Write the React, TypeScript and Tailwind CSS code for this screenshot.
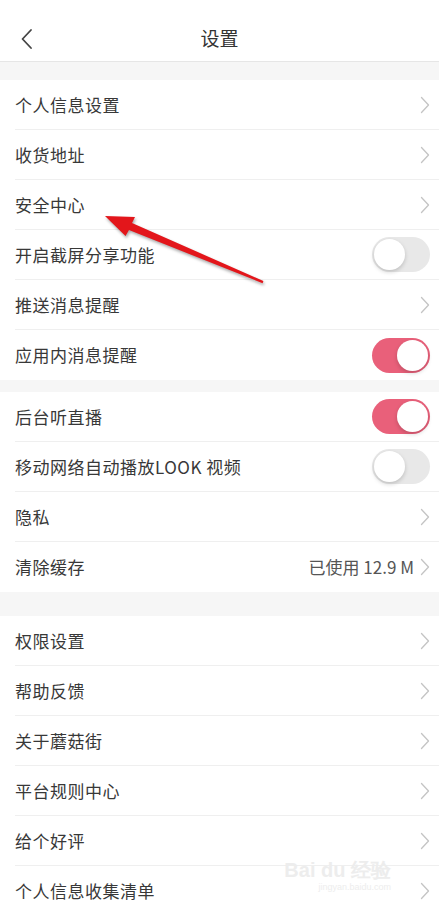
import React from 'react';

type Row = {
  label: string;
  kind: 'link' | 'on' | 'off';
  value?: string;
};

const groups: Row[][] = [
  [
    { label: '个人信息设置', kind: 'link' },
    { label: '收货地址', kind: 'link' },
    { label: '安全中心', kind: 'link' },
    { label: '开启截屏分享功能', kind: 'off' },
    { label: '推送消息提醒', kind: 'link' },
    { label: '应用内消息提醒', kind: 'on' },
  ],
  [
    { label: '后台听直播', kind: 'on' },
    { label: '移动网络自动播放LOOK 视频', kind: 'off' },
    { label: '隐私', kind: 'link' },
    { label: '清除缓存', kind: 'link', value: '已使用 12.9 M' },
  ],
  [
    { label: '权限设置', kind: 'link' },
    { label: '帮助反馈', kind: 'link' },
    { label: '关于蘑菇街', kind: 'link' },
    { label: '平台规则中心', kind: 'link' },
    { label: '给个好评', kind: 'link' },
    { label: '个人信息收集清单', kind: 'link' },
  ],
];

const Chevron = () => (
  <svg width="10" height="18" viewBox="0 0 10 18" fill="none">
    <path d="M1.5 1.5 L8.5 9 L1.5 16.5" stroke="#c4c4c4" strokeWidth="1.3" strokeLinecap="round" strokeLinejoin="round" />
  </svg>
);

const Toggle = ({ on }: { on: boolean }) => (
  <div
    className={`w-[58px] h-[35px] rounded-full p-[2px] flex items-center ${
      on ? 'bg-[#e9607a] justify-end' : 'bg-[#e8e8e8] justify-start'
    }`}
  >
    <div className="w-[31px] h-[31px] rounded-full bg-white shadow-[0_2px_4px_rgba(0,0,0,0.18)]" />
  </div>
);

export default function App() {
  return (
    <div
      className="relative w-[439px] h-[906px] overflow-hidden bg-[#f6f6f6] text-[#383838]"
      style={{ fontFamily: '"Noto Sans CJK SC", "Noto Sans", sans-serif' }}
    >
      {/* header */}
      <div className="h-[62px] pt-[16px] bg-white border-b border-[#e6e6e6] flex items-center relative">
        <svg className="ml-[20px]" width="14" height="22" viewBox="0 0 14 22" fill="none">
          <path d="M11 2 L2.5 11 L11 20" stroke="#444" strokeWidth="1.8" strokeLinecap="round" strokeLinejoin="round" />
        </svg>
        <div className="absolute left-0 right-0 text-center text-[19px] text-[#333] pointer-events-none">设置</div>
      </div>

      {groups.map((g, gi) => (
        <div key={gi} className={`bg-white ${gi === 0 ? 'mt-[18px]' : gi === 1 ? 'mt-[12px]' : 'mt-[24px]'}`}>
          {g.map((r, ri) => (
            <div key={ri} className="pl-[15px]">
              <div
                className={`h-[50px] flex items-center pr-[9px] ${
                  ri < g.length - 1 ? 'border-b border-[#efefef]' : ''
                }`}
              >
                <span className="flex-1 text-[17px] tracking-[0.5px]">{r.label}</span>
                {r.value && <span className="text-[17px] text-[#555] mr-[6px]">{r.value}</span>}
                {r.kind === 'link' && <Chevron />}
                {r.kind !== 'link' && <Toggle on={r.kind === 'on'} />}
              </div>
            </div>
          ))}
        </div>
      ))}

      {/* annotation arrow */}
      <svg className="absolute inset-0 pointer-events-none" width="439" height="906" viewBox="0 0 439 906">
        <polygon
          points="105,216 135,217 132,223 263.4,281 262.6,283.2 129,230 125.5,236"
          fill="#e3161b"
          style={{ filter: 'drop-shadow(1px 2px 1.5px rgba(0,0,0,0.35))' }}
        />
      </svg>

      {/* watermark */}
      <div className="absolute right-[48px] bottom-[14px] flex flex-col items-end text-[#ededed] pointer-events-none">
        <span className="text-[20px] font-bold leading-none" style={{ fontFamily: '"Liberation Sans", sans-serif' }}>Bai du 经验</span>
        <span className="text-[9px] leading-none mt-[3px]" style={{ fontFamily: '"Liberation Sans", sans-serif' }}>jingyan.baidu.com</span>
      </div>
    </div>
  );
}
